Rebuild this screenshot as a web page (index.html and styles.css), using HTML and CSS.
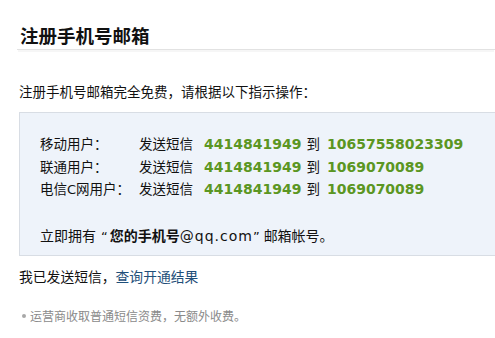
FILE: index.html
```html
<!DOCTYPE html>
<html lang="zh-CN">
<head>
<meta charset="utf-8">
<title>注册手机号邮箱</title>
<link rel="stylesheet" href="styles.css">
</head>
<body>
<div class="page">
  <h1 class="title">注册手机号邮箱</h1>
  <p class="intro">注册手机号邮箱完全免费，请根据以下指示操作：</p>
  <div class="box">
    <div class="rows">
      <span class="label">移动用户：</span>
      <span class="cmd">发送短信<b class="num n1">4414841949</b>到<b class="num n2">10657558023309</b></span>
      <span class="label">联通用户：</span>
      <span class="cmd">发送短信<b class="num n1">4414841949</b>到<b class="num n2">1069070089</b></span>
      <span class="label">电信<span class="lat">C</span>网用户：</span>
      <span class="cmd">发送短信<b class="num n1">4414841949</b>到<b class="num n2">1069070089</b></span>
    </div>
    <p class="own">立即拥有<span class="lat q1">“</span><b>您的手机号</b><span class="lat mail">@qq.com</span><span class="lat q2">”</span>邮箱帐号。</p>
  </div>
  <p class="sent">我已发送短信，<a class="link" href="#">查询开通结果</a></p>
  <p class="note"><span class="dot"></span>运营商收取普通短信资费，无额外收费。</p>
</div>
</body>
</html>
```

FILE: styles.css
```css
html, body {
  margin: 0;
  padding: 0;
  background: #ffffff;
  overflow: hidden;
}
body {
  font-family: "Noto Sans CJK SC", "DejaVu Sans", sans-serif;
  font-size: 13.5px;
  color: #111;
}
.page {
  padding-left: 17px;
}
.title {
  margin: 0;
  padding: 23px 0 2px 3px;
  font-size: 18.5px;
  line-height: 24px;
  font-weight: bold;
  color: #111;
  border-bottom: 1px solid #e2e2e2;
  box-shadow: 0 3px 0 -1px #f6f6f6;
}
.intro {
  margin: 30px 0 0 2px;
  line-height: 22px;
}
.box {
  margin: 10px -20px 0 2px;
  padding: 19px 20px 9px 20px;
  background: #eef3fa;
  border: 1px solid #d8dde4;
}
.rows {
  display: grid;
  grid-template-columns: 99px auto;
  line-height: 22.5px;
}
.lat {
  font-family: "DejaVu Sans", sans-serif;
  font-size: 13px;
  line-height: 1;
}
.num {
  font-family: "DejaVu Sans", sans-serif;
  font-weight: bold;
  font-size: 14px;
  line-height: 1;
  color: #5b9622;
}
.n1 {
  margin: 0 5px 0 11px;
}
.n2 {
  margin-left: 7px;
}
.own {
  margin: 24px 0 0 0;
  font-size: 14px;
  line-height: 22.5px;
}
.own b {
  font-weight: bold;
}
.q1 {
  margin-left: 5px;
  margin-right: 2px;
}
.mail {
  font-size: 14px;
  letter-spacing: 1px;
}
.q2 {
  margin-right: 4px;
}
.sent {
  margin: 9px 0 0 2px;
  line-height: 22px;
  font-size: 13.8px;
}
.link {
  color: #1f4f7a;
  text-decoration: none;
}
.note {
  margin: 20px 0 0 2px;
  line-height: 18px;
  font-size: 12px;
  color: #8a8a8a;
  display: flex;
  align-items: center;
}
.dot {
  width: 4px;
  height: 4px;
  border-radius: 50%;
  background: #a8a8a8;
  margin: 0 4px 0 3px;
}
```
